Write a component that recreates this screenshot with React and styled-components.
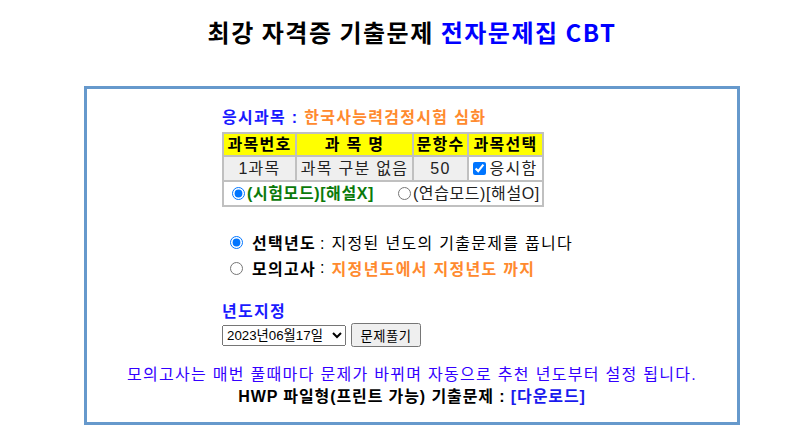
import React from 'react';
import styled, { createGlobalStyle } from 'styled-components';

const GlobalStyle = createGlobalStyle`
  body {
    margin: 0;
    background: #ffffff;
    font-family: "Liberation Sans", "Noto Sans CJK KR", sans-serif;
    font-size: 16px;
    letter-spacing: 1.3px;
    color: #000;
  }
`;

const Page = styled.div`
  width: 656px;
  margin-left: 84px;
`;

const Title = styled.h1`
  margin: 16px 0 39px;
  font-size: 24px;
  line-height: 31px;
  letter-spacing: 1.5px;
  font-weight: bold;
  text-align: center;
  font-family: "Noto Sans CJK KR", "Liberation Sans", sans-serif;
`;

const Blue = styled.span`
  color: #0000ff;
`;

const Frame = styled.div`
  box-sizing: border-box;
  width: 656px;
  border: 3px solid #6699cc;
  padding: 18px 0 14px;
`;

const Inner = styled.div`
  width: 380px;
  margin: 0 auto;
`;

const SubjectLine = styled.div`
  font-weight: bold;
  line-height: 22px;
  margin-bottom: 3px;
  color: #1a1aff;
`;

const Orange = styled.span`
  color: #ff8a2e;
  font-weight: bold;
`;

const Table = styled.table`
  border: 1px solid #c0c0c0;
  border-spacing: 0;
  line-height: 21px;
`;

const Th = styled.th`
  border: 1px solid #c0c0c0;
  background: #ffff00;
  font-weight: bold;
  height: 21px;
  padding: 0 2px;
  white-space: nowrap;
  width: ${p => p.$w}px;
`;

const Td = styled.td`
  border: 1px solid #c0c0c0;
  background: ${p => (p.$white ? '#ffffff' : '#efefef')};
  height: 23px;
  padding: 0 2px;
  text-align: center;
  white-space: nowrap;
  color: #222;
`;

const ModeCell = styled.td`
  border: 1px solid #c0c0c0;
  height: 23px;
  padding: 0 0 0 5px;
  white-space: nowrap;
  letter-spacing: 0.6px;
`;

const ModeOption = styled.label`
  display: inline-flex;
  align-items: center;
  margin-right: ${p => p.$gap || 0}px;
  color: ${p => (p.$active ? '#0a7a0a' : '#222')};
  font-weight: ${p => (p.$active ? 'bold' : 'normal')};
`;

const SmallRadio = styled.input`
  margin: 0 2px 0 3px;
  width: 13px;
  height: 13px;
`;

const Check = styled.input`
  margin: 0 3px 0 0;
  width: 13px;
  height: 13px;
  vertical-align: -1px;
`;

const Options = styled.div`
  margin-top: 22px;
`;

const OptionRow = styled.label`
  display: flex;
  align-items: center;
  height: 26px;
`;

const Radio = styled.input`
  margin: 0 9px 0 8px;
  width: 13px;
  height: 13px;
`;

const Strong = styled.b`
  margin-right: 4px;
`;

const YearLabel = styled.div`
  margin-top: 20px;
  font-weight: bold;
  color: #1a1aff;
  line-height: 22px;
`;

const Controls = styled.div`
  display: flex;
  align-items: center;
  gap: 5px;
  height: 24px;
`;

const Select = styled.select`
  width: 124px;
  height: 21px;
  font-family: "Liberation Sans", "Noto Sans CJK KR", sans-serif;
  font-size: 13.3px;
  letter-spacing: 0;
  padding: 0;
`;

const Button = styled.button`
  width: 70px;
  height: 24px;
  font-family: "Liberation Sans", "Noto Sans CJK KR", sans-serif;
  font-size: 13.3px;
  letter-spacing: 0.5px;
  padding: 0;
`;

const Notice = styled.div`
  margin-top: 17px;
  text-align: center;
  line-height: 22px;
  color: #3300ff;
`;

const Download = styled.div`
  text-align: center;
  line-height: 22px;
  font-weight: bold;
  letter-spacing: 0.9px;
`;

const Link = styled.a`
  color: #1a1aee;
  text-decoration: none;
`;

export default function App() {
  return (
    <>
      <GlobalStyle />
      <Page>
        <Title>
          최강 자격증 기출문제 <Blue>전자문제집 CBT</Blue>
        </Title>
        <Frame>
          <Inner>
            <SubjectLine>
              응시과목 : <Orange>한국사능력검정시험 심화</Orange>
            </SubjectLine>
            <Table>
              <thead>
                <tr>
                  <Th $w={67}>과목번호</Th>
                  <Th $w={111}>과 목 명</Th>
                  <Th $w={49}>문항수</Th>
                  <Th $w={69}>과목선택</Th>
                </tr>
              </thead>
              <tbody>
                <tr>
                  <Td>1과목</Td>
                  <Td>과목 구분 없음</Td>
                  <Td>50</Td>
                  <Td $white>
                    <Check type="checkbox" defaultChecked />응시함
                  </Td>
                </tr>
                <tr>
                  <ModeCell colSpan={4}>
                    <ModeOption $active $gap={21}>
                      <SmallRadio type="radio" name="mode" defaultChecked />
                      (시험모드)[해설X]
                    </ModeOption>
                    <ModeOption>
                      <SmallRadio type="radio" name="mode" />
                      (연습모드)[해설O]
                    </ModeOption>
                  </ModeCell>
                </tr>
              </tbody>
            </Table>
            <Options>
              <OptionRow>
                <Radio type="radio" name="kind" defaultChecked />
                <Strong>선택년도</Strong>: 지정된 년도의 기출문제를 풉니다
              </OptionRow>
              <OptionRow>
                <Radio type="radio" name="kind" />
                <Strong>모의고사</Strong>:&nbsp;<Orange>지정년도에서 지정년도 까지</Orange>
              </OptionRow>
            </Options>
            <YearLabel>년도지정</YearLabel>
            <Controls>
              <Select defaultValue="2023-06-17">
                <option value="2023-06-17">2023년06월17일</option>
                <option value="2023-02-11">2023년02월11일</option>
              </Select>
              <Button type="button">문제풀기</Button>
            </Controls>
          </Inner>
          <Notice>모의고사는 매번 풀때마다 문제가 바뀌며 자동으로 추천 년도부터 설정 됩니다.</Notice>
          <Download>
            HWP 파일형(프린트 가능) 기출문제 : <Link href="#">[다운로드]</Link>
          </Download>
        </Frame>
      </Page>
    </>
  );
}
